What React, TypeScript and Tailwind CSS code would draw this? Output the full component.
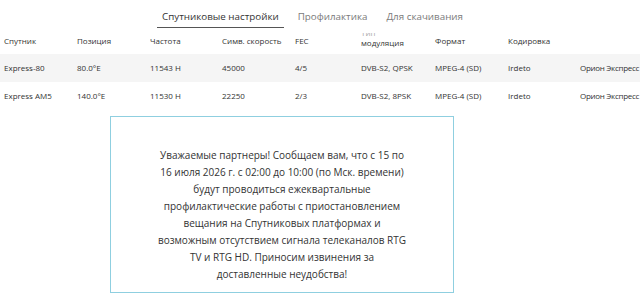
import React from "react";

const rows = [
  ["Express-80", "80.0°E", "11543 H", "45000", "4/5", "DVB-S2, QPSK", "MPEG-4 (SD)", "Irdeto", "Орион Экспресс"],
  ["Express AM5", "140.0°E", "11530 H", "22250", "2/3", "DVB-S2, 8PSK", "MPEG-4 (SD)", "Irdeto", "Орион Экспресс"],
];

const widths = ["w-[73px]", "w-[73px]", "w-[72px]", "w-[73px]", "w-[66px]", "w-[74px]", "w-[73px]", "w-[72px]", "w-[64px]"];

export default function App() {
  return (
    <div className="w-[640px] h-[300px] overflow-hidden bg-white text-[#333]" style={{ fontFamily: '"Open Sans", sans-serif' }}>
      <div className="relative z-10 bg-white flex pl-[157px] pt-[9px] h-[30px] text-[9.8px]">
        <div className="px-[5px] h-[19px] border-b border-[#555] text-[#333] leading-[16px]">Спутниковые настройки</div>
        <div className="ml-[9px] px-[5px] text-[#7a7a7a] leading-[16px]">Профилактика</div>
        <div className="ml-[9px] px-[5px] text-[#7a7a7a] leading-[16px]">Для скачивания</div>
      </div>
      <div className="w-[640px] text-[8px]">
        <div className="flex h-[26px] items-center -mt-[2px]">
          {["Спутник", "Позиция", "Частота", "Симв. скорость", "FEC"].map((h, j) => (
            <div key={h} className={`${widths[j]} pl-[4px] shrink-0`}>{h}</div>
          ))}
          <div className={`${widths[5]} pl-[4px] shrink-0 leading-[11px] -mt-[2px]`}>
            <div className="h-[4px] overflow-hidden relative"><span className="absolute bottom-[-1px] left-0 text-[#aaa]">Тип</span></div>
            <div>модуляция</div>
          </div>
          {["Формат", "Кодировка"].map((h, j) => (
            <div key={h} className={`${widths[6 + j]} pl-[4px] shrink-0`}>{h}</div>
          ))}
        </div>
        {rows.map((r, i) => (
          <div key={i} className={`flex h-[28px] items-center ${i === 0 ? "bg-[#f5f5f5]" : "bg-white"}`}>
            {r.map((c, j) => (
              <div key={j} className={`${widths[j]} shrink-0 whitespace-nowrap pl-[4px] ${j === 8 ? "tracking-[-0.3px]" : ""}`}>{c}</div>
            ))}
          </div>
        ))}
      </div>
      <div className="mt-[6px] ml-[110px] w-[344px] h-[177px] border border-[#8fcfe0] flex justify-center pt-[30px]">
        <p className="w-[256px] text-center text-[10px] leading-[17px] text-[#333]">
          Уважаемые партнеры! Сообщаем вам, что с 15 по 16 июля 2026 г. с 02:00 до 10:00 (по Мск. времени) будут проводиться ежеквартальные профилактические работы с приостановлением вещания на Спутниковых платформах и возможным отсутствием сигнала телеканалов RTG TV и RTG HD. Приносим извинения за доставленные неудобства!
        </p>
      </div>
    </div>
  );
}
